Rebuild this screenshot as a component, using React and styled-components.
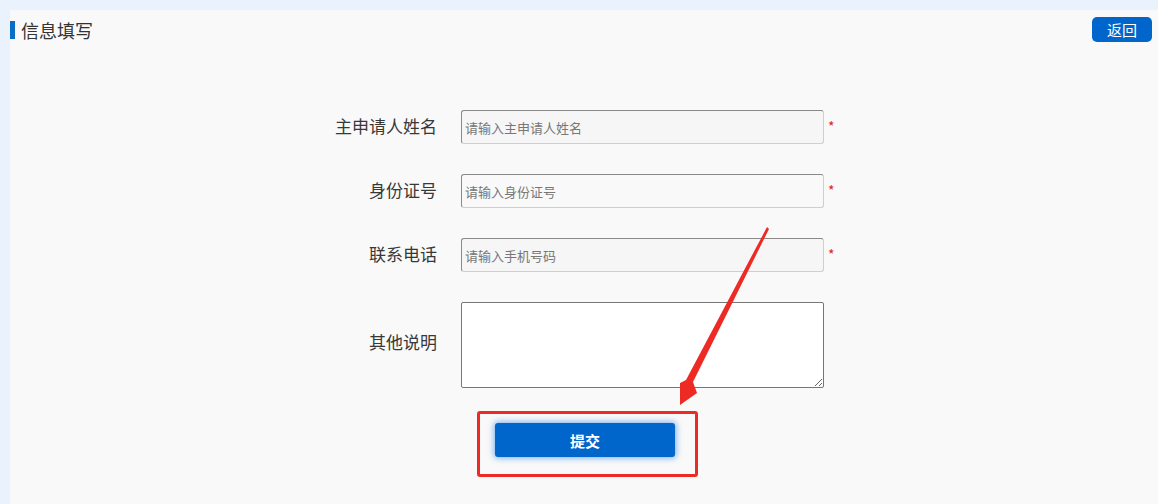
import React from "react";
import styled, { createGlobalStyle } from "styled-components";

const Global = createGlobalStyle`
  html, body { margin: 0; padding: 0; background: #eaf3fd; }
  body { font-family: "Microsoft YaHei", "Noto Sans CJK SC", "Noto Sans", sans-serif; color: #333; }
  * { box-sizing: border-box; }
`;

const Page = styled.div`
  position: relative;
  width: 1158px;
  height: 504px;
  padding: 10px 0 0 10px;
  overflow: hidden;
`;

const Panel = styled.div`
  background: #f9f9f9;
  height: 100%;
  padding-top: 7px;
`;

const TitleBar = styled.div`
  display: flex;
  align-items: center;
  justify-content: space-between;
  height: 25px;
  padding-right: 6px;
`;

const Title = styled.div`
  display: flex;
  align-items: center;
  gap: 6px;
  font-size: 18px;
  color: #333;
  line-height: 1;
  &::before {
    content: "";
    display: block;
    width: 5px;
    height: 18px;
    background: #0a6fc2;
  }
`;

const BackButton = styled.button`
  width: 60px;
  height: 25px;
  border: none;
  border-radius: 5px;
  background: #0066cc;
  color: #fff;
  font-family: inherit;
  font-size: 15px;
  line-height: 25px;
  padding: 0;
`;

const Form = styled.div`
  display: grid;
  grid-template-columns: 120px 363px auto;
  column-gap: 26px;
  row-gap: 30px;
  align-items: center;
  margin: 68px 0 0 305px;
`;

const Label = styled.div`
  text-align: right;
  font-size: 17px;
  color: #383838;
  margin-right: -2px;
  padding-bottom: ${p => p.$lift || 3}px;
`;

const Input = styled.input`
  height: 34px;
  width: 363px;
  border: 1px solid;
  border-color: #8a8a8a #cfcfcf #cfcfcf #8a8a8a;
  border-radius: 3px;
  background: ${p => p.$bg || "#f6f6f6"};
  padding: 0 3px;
  font-family: inherit;
  font-size: 13px;
  color: #333;
  &::placeholder { color: #777; }
`;

const Required = styled.span`
  color: #e02020;
  font-size: 14px;
  margin-left: -22px;
  align-self: start;
  padding-top: 6px;
`;

const TextArea = styled.textarea`
  height: 86px;
  width: 363px;
  border: 1px solid #767676;
  border-radius: 2px;
  background: #fff;
  font-family: inherit;
  display: block;
`;

const Spacer = styled.div``;

const Highlight = styled.div`
  grid-column: 2;
  width: 221px;
  height: 66px;
  margin: -7px 0 0 16px;
  border: 3px solid #ee2a24;
  border-radius: 3px;
  padding: 9px 0 0 15px;
`;

const SubmitButton = styled.button`
  width: 180px;
  height: 34px;
  border: none;
  border-radius: 3px;
  background: #0066cc;
  color: #fff;
  font-family: inherit;
  font-size: 15px;
  font-weight: 600;
  box-shadow: 0 0 6px 1px rgba(0, 110, 230, 0.55);
  padding: 0;
`;

const ArrowLayer = styled.svg`
  position: absolute;
  left: 0;
  top: 0;
  pointer-events: none;
`;

export default function App() {
  return (
    <>
      <Global />
      <Page>
        <Panel>
          <TitleBar>
            <Title>信息填写</Title>
            <BackButton>返回</BackButton>
          </TitleBar>
          <Form>
            <Label>主申请人姓名</Label>
            <Input placeholder="请输入主申请人姓名" />
            <Required>*</Required>

            <Label>身份证号</Label>
            <Input placeholder="请输入身份证号" $bg="#f9f9f9" />
            <Required>*</Required>

            <Label>联系电话</Label>
            <Input placeholder="请输入手机号码" />
            <Required>*</Required>

            <Label $lift={8}>其他说明</Label>
            <TextArea />
            <Spacer />

            <Highlight>
              <SubmitButton>提交</SubmitButton>
            </Highlight>
          </Form>
        </Panel>
        <ArrowLayer width="1158" height="504" viewBox="0 0 1158 504">
          <polygon
            points="767,227 769,229 693,382 697,393 680,405 680,383 686,380"
            fill="#ee2a24"
          />
        </ArrowLayer>
      </Page>
    </>
  );
}
